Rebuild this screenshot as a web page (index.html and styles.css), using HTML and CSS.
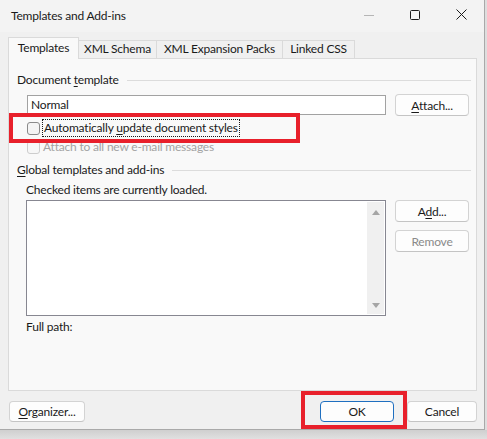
FILE: index.html
```html
<!DOCTYPE html>
<html>
	<head>
		<meta charset="utf-8" />
		<title>Templates and Add-ins</title>
		<link rel="stylesheet" href="styles.css">
	</head>
	<body>
		<div class="dialog">
			<div class="titlebar">
				<span class="title">Templates and Add-ins</span>
				<div class="controls">
					<span class="ctl">
						<svg width="10" height="10" viewBox="0 0 10 10"><path d="M0 5.5h10" stroke="#b5b5b5" stroke-width="1"/></svg>
					</span>
					<span class="ctl">
						<svg width="10" height="10" viewBox="0 0 10 10"><rect x="0.5" y="0.5" width="9" height="9" rx="1" fill="none" stroke="#1a1a1a" stroke-width="1"/></svg>
					</span>
					<span class="ctl">
						<svg width="11" height="11" viewBox="0 0 11 11"><path d="M0.5 0.5l10 10M10.5 0.5l-10 10" stroke="#1a1a1a" stroke-width="1"/></svg>
					</span>
				</div>
			</div>

			<div class="tabs">
				<div class="tab active">Templates</div>
				<div class="tab t2">XML Schema</div>
				<div class="tab t3">XML Expansion Packs</div>
				<div class="tab t4">Linked CSS</div>
			</div>

			<div class="panel">
				<div class="group-head"><span>Document <u>t</u>emplate</span><i class="rule"></i></div>
				<div class="row tpl-row">
					<div class="textbox">Normal</div>
					<button class="btn"><u>A</u>ttach...</button>
				</div>
				<div class="check first">
					<span class="box"></span>
					<span class="focus">Automatically <u>u</u>pdate document styles</span>
				</div>
				<div class="check off">
					<span class="box"></span>
					<span class="lbl">Attach to all new e-mail messages</span>
				</div>

				<div class="group-head global"><span><u>G</u>lobal templates and add-ins</span><i class="rule"></i></div>
				<div class="note">Checked items are currently loaded.</div>
				<div class="row list-row">
					<div class="listbox">
						<div class="scroll">
							<span class="arr up"></span>
							<span class="arr down"></span>
						</div>
					</div>
					<div class="side">
						<button class="btn">A<u>d</u>d...</button>
						<button class="btn off">Remove</button>
					</div>
				</div>
				<div class="note path">Full path:</div>
			</div>

			<div class="footer">
				<button class="btn org"><u>O</u>rganizer...</button>
				<button class="btn ok">OK</button>
				<button class="btn cancel">Cancel</button>
			</div>

			<!-- red marks drawn over the screenshot -->
			<div class="mark mark-check"></div>
			<div class="mark mark-ok"></div>
		</div>
	</body>
</html>
```

FILE: styles.css
```css
body{
	margin: 0;
	width: 487px;
	height: 439px;
	overflow: hidden;
	background: linear-gradient(#cfcfcf, #e2e2e2 10px) 0 430px no-repeat, #dedede;
	font-family: Lato, "Noto Sans", sans-serif;
	font-size: 12px;
	letter-spacing: -0.2px;
	color: #1a1a1a;
}
u{
	text-decoration-thickness: 1px;
	text-underline-offset: 2px;
}
.dialog{
	position: relative;
	box-sizing: border-box;
	width: 485px;
	height: 430px;
	background: #f0f0f0;
	border-right: 1px solid #a9a9a9;
	border-bottom: 1px solid #a9a9a9;
	display: flex;
	flex-direction: column;
}
.titlebar{
	height: 32px;
	display: flex;
	align-items: center;
	background: #f3f3f3;
	flex: none;
}
.title{
	padding-left: 11px;
	padding-bottom: 2px;
	flex: 1;
}
.controls{
	display: flex;
	align-self: stretch;
}
.ctl{
	width: 46px;
	display: flex;
	align-items: center;
	justify-content: center;
	padding-bottom: 3px;
}

/* tabs */
.tabs{
	display: flex;
	align-items: flex-end;
	height: 21px;
	margin: 5px 0 0 8px;
	flex: none;
}
.tab{
	box-sizing: border-box;
	height: 18px;
	line-height: 16px;
	text-align: center;
	border: 1px solid #dadada;
	border-bottom: none;
	border-left: none;
	background: #f0f0f0;
}
.tab.active{
	position: relative;
	z-index: 1;
	width: 71px;
	height: 22px;
	margin-bottom: -1px;
	line-height: 19px;
	border-left: 1px solid #dadada;
	background: #f9f9f9;
}
.t2{ width: 78px; }
.t3{ width: 126px; }
.t4{ width: 72px; }

.panel{
	box-sizing: border-box;
	width: 469px;
	height: 333px;
	margin-left: 8px;
	padding: 13px 7px 0 8px;
	border: 1px solid #dadada;
	background: #f9f9f9;
	flex: none;
}
.group-head{
	display: flex;
	align-items: center;
	line-height: 16px;
	margin-right: -2px;
}
.rule{
	flex: 1;
	height: 1px;
	background: #dcdcdc;
	margin: 1px 0 0 8px;
}
.row{
	display: flex;
	gap: 9px;
	margin-left: 10px;
}
.tpl-row{
	margin-top: 6px;
	align-items: center;
}
.textbox{
	box-sizing: border-box;
	width: 360px;
	height: 20px;
	line-height: 18px;
	padding-left: 3px;
	border: 1px solid #a2a2a2;
	background: #fff;
}
.btn{
	box-sizing: border-box;
	width: 74px;
	height: 22px;
	padding: 0;
	font: inherit;
	letter-spacing: inherit;
	color: #1a1a1a;
	background: #fdfdfd;
	border: 1px solid #d3d3d3;
	border-bottom-color: #c4c4c4;
	border-radius: 4px;
}
.btn.off{
	color: #8a8a8a;
}

.check{
	display: flex;
	align-items: center;
	gap: 3px;
	margin-left: 10px;
	line-height: 16px;
}
.check.first{
	margin-top: 4px;
}
.check.off{
	margin-top: 3px;
	color: #a3a3a3;
}
.box{
	box-sizing: border-box;
	width: 13px;
	height: 13px;
	border: 1px solid #8a8a8a;
	border-radius: 3px;
	background: #f4f4f4;
}
.check.off .box{
	border-color: #cdcdcd;
	background: #f7f7f7;
}
.focus{
	outline: 1px dotted #1a1a1a;
	padding: 0 1px;
}

.global{
	margin-top: 7px;
}
.note{
	margin: 4px 0 0 9px;
	line-height: 16px;
}
.list-row{
	margin: 2px 0 0 9px;
	gap: 9px;
}
.listbox{
	box-sizing: border-box;
	width: 361px;
	height: 116px;
	border: 1px solid #878791;
	background: #fff;
	display: flex;
	justify-content: flex-end;
}
.scroll{
	width: 17px;
	background: #f0f0f0;
	margin: 1px 1px 1px 0;
	display: flex;
	flex-direction: column;
	justify-content: space-between;
	align-items: center;
	padding: 8px 0 6px;
}
.arr{
	width: 0;
	height: 0;
	border-left: 4px solid transparent;
	border-right: 4px solid transparent;
}
.arr.up{
	border-bottom: 5px solid #a5a5a5;
}
.arr.down{
	border-top: 5px solid #a5a5a5;
}
.side{
	display: flex;
	flex-direction: column;
	gap: 8px;
}
.side .btn{
	height: 22px;
}
.path{
	margin-top: 3px;
}

.footer{
	display: flex;
	align-items: center;
	padding: 10px 7px 0 9px;
}
.footer .btn{
	height: 21px;
}
.org{
	width: 76px;
	margin-right: auto;
}
.ok{
	border: 1px solid #1f6fc0;
	margin-right: 13px;
}
.cancel{
	width: 70px;
}

.mark{
	position: absolute;
	box-sizing: border-box;
	border: 4px solid #e8202b;
}
.mark-check{
	left: 9px;
	top: 113px;
	width: 291px;
	height: 30px;
}
.mark-ok{
	left: 301px;
	top: 391px;
	width: 106px;
	height: 38px;
}
```
